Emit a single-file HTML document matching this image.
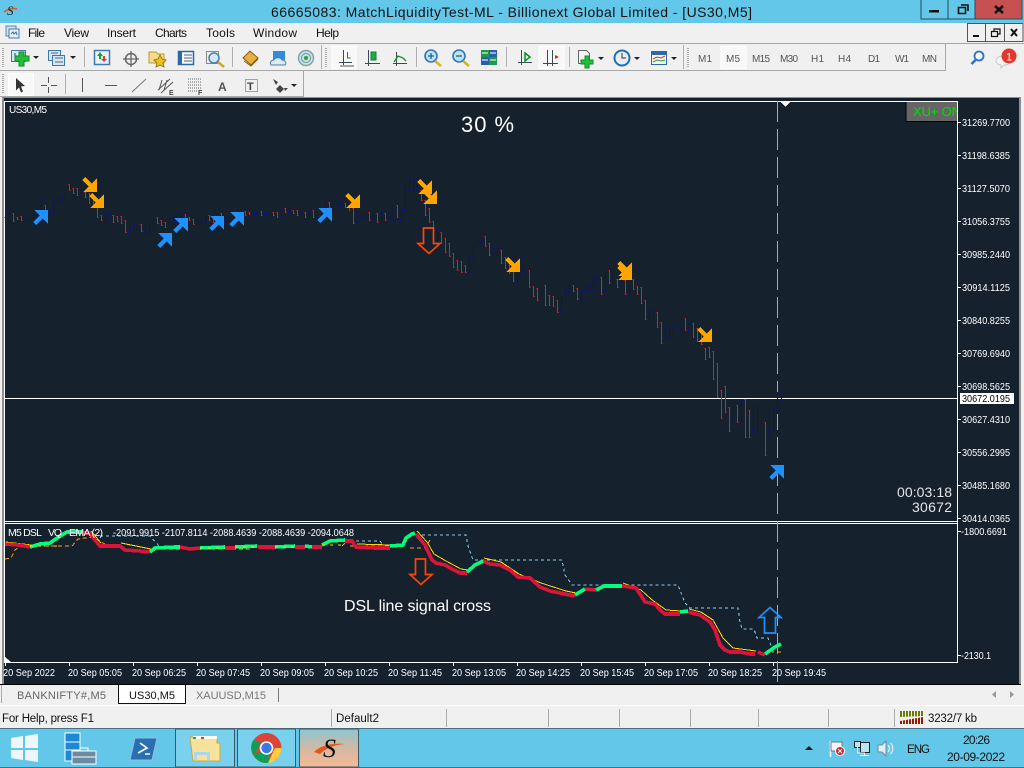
<!DOCTYPE html>
<html><head><meta charset="utf-8"><title>MT4</title>
<style>
html,body{margin:0;padding:0;width:1024px;height:768px;overflow:hidden;background:#f0f0f0}
svg{display:block;position:absolute;left:0;top:0}
text{font-family:"Liberation Sans",sans-serif}
.m{font-size:12px;fill:#111}
.p{font-size:10.5px;fill:#fff}
.t{font-size:10.5px;fill:#fff}
.f{font-size:10px;fill:#555}
</style></head><body>
<svg width="1024" height="768" viewBox="0 0 1024 768" xmlns="http://www.w3.org/2000/svg">
<defs>
<polygon id="o" fill="#FFA500" points="0,3 3,0 9.500,6.500 15,1 15,15 1,15 6.500,9.500" shape-rendering="crispEdges"/>
<g id="b"><polygon fill="#1E90FF" transform="translate(0,15) scale(1,-1)" points="0,3 3,0 9.500,6.500 15,1 15,15 1,15 6.500,9.500" shape-rendering="crispEdges"/></g>
<linearGradient id="act" x1="0" y1="0" x2="0" y2="1"><stop offset="0" stop-color="#8cc6d0"/><stop offset=".55" stop-color="#d8b8a0"/><stop offset="1" stop-color="#f6b994"/></linearGradient>
</defs>
<!-- title bar -->
<rect width="1024" height="23" fill="#63C7E9"/>
<path d="M4 12C8 9 14 8 17 9" stroke="#E4571B" stroke-width="1.600" fill="none"/>
<text x="7" y="15" font-size="13" font-style="italic" fill="#222" style="font-family:'Liberation Serif',serif">S</text>
<text x="271" y="17" font-size="14" fill="#111" textLength="481">66665083: MatchLiquidityTest-ML - Billionext Global Limited - [US30,M5]</text>
<rect x="921" y="-1" width="27" height="20" fill="#63C7E9" stroke="#2a4a5a"/>
<rect x="948" y="-1" width="27" height="20" fill="#63C7E9" stroke="#2a4a5a"/>
<rect x="975" y="-1" width="47" height="20" fill="#C75050" stroke="#2a4a5a"/>
<rect x="929" y="10" width="10" height="2.500" fill="#111"/>
<path d="M958.500 7.500h7v6h-7zM961 5h7v6" fill="none" stroke="#111" stroke-width="1.600"/>
<path d="M995 6l8 7M1003 6l-8 7" stroke="#111" stroke-width="2.600"/>
<!-- menu -->
<rect y="23" width="1024" height="20" fill="#f0f0f0"/>
<rect x="6" y="26" width="10" height="10" fill="#cfe2f3" stroke="#5b86b5"/>
<rect x="9" y="29" width="10" height="9" fill="#e6f0fa" stroke="#4a78ab"/>
<path d="M11 34l2-2 1 2 2-2 1 3" stroke="#3a6ca0" fill="none"/>
<text class="m" x="28" y="37" textLength="17">File</text>
<text class="m" x="64" y="37" textLength="25">View</text>
<text class="m" x="107" y="37" textLength="29">Insert</text>
<text class="m" x="155" y="37" textLength="32">Charts</text>
<text class="m" x="206" y="37" textLength="29">Tools</text>
<text class="m" x="253" y="37" textLength="44">Window</text>
<text class="m" x="316" y="37" textLength="23">Help</text>
<g fill="#f0f0f0" stroke="#555"><rect x="967.500" y="23.500" width="18" height="18"/><rect x="985.500" y="23.500" width="19" height="18"/><rect x="1004.500" y="23.500" width="18.500" height="18"/></g>
<rect x="973" y="35" width="6" height="2" fill="#111"/>
<path d="M991.500 31.500h6v5h-6zM994 31v-2h6v5h-3" fill="none" stroke="#111" stroke-width="1.200"/>
<path d="M1011 29l6 7M1017 29l-6 7" stroke="#111" stroke-width="2"/>
<!-- toolbars -->
<rect y="43" width="1024" height="55" fill="#f0f0f0"/>
<path d="M0 43.500H1024" stroke="#a8a8a8"/>
<path d="M0 70.500H945.500V44" stroke="#a8a8a8" fill="none"/>
<path d="M0 96.500H303.500V71" stroke="#a8a8a8" fill="none"/>
<g stroke="#b0b0b0"><path d="M84.500 47v20M232.500 47v20M321.500 45v24M416.500 47v20M506.500 47v20M569.500 47v20M683.500 45v24M65.500 74v20"/></g>
<g stroke="#aaa" stroke-dasharray="1 1" stroke-width="2"><path d="M3 48v20M326 48v20M688 48v20M3 74v20"/></g>
<!-- selected boxes -->
<g fill="#f8f8f8" stroke="#fff"><rect x="332" y="46.500" width="24" height="22"/><rect x="539" y="46.500" width="25" height="22"/><rect x="721" y="46.500" width="25" height="22"/><rect x="8.500" y="73.500" width="25" height="22"/></g>
<!-- new chart -->
<rect x="11.500" y="50.500" width="14" height="11" fill="#d4e6f8" stroke="#3f74ad"/>
<path d="M15 53v6M15 59h6" stroke="#345" fill="none"/>
<path d="M18 53h5v4h5v5h-5v5h-5v-5h-4v-5h4z" fill="#22C03A" stroke="#128a25" transform="translate(1,-1)"/>
<path d="M33 56h6l-3 3z" fill="#222"/>
<!-- profiles -->
<rect x="48.500" y="50.500" width="12" height="10" fill="#d4e6f8" stroke="#3f74ad"/><rect x="52.500" y="55.500" width="12" height="10" fill="#d4e6f8" stroke="#3f74ad"/>
<path d="M55 58h8M55 62h8M51 53h7" stroke="#567"/>
<path d="M70 56h6l-3 3z" fill="#222"/>
<!-- market watch -->
<rect x="94.500" y="50.500" width="15" height="14" fill="#eaf2fb" stroke="#3f78b5" stroke-width="1.500"/>
<path d="M100 52l3 4h-2v3h-2v-3h-2z" fill="#1a9f2b"/><path d="M104 62l-3-3h2v-3h2v3h2z" fill="#d8402a"/>
<!-- crosshair -->
<circle cx="131" cy="59" r="5.500" fill="none" stroke="#666" stroke-width="1.500"/><path d="M131 51v16M123 59h16" stroke="#666" stroke-width="1.300"/>
<!-- navigator -->
<path d="M149 52h7l2 2h6v9h-15z" fill="#f4dc88" stroke="#b59a3e"/>
<path d="M160 55l2 4 4 1-3 3 1 4-4-2-4 2 1-4-3-3 4-1z" fill="#f0c21e" stroke="#9e7e14"/>
<!-- terminal -->
<rect x="178.500" y="51.500" width="15" height="13" fill="#f4f8fc" stroke="#2f66a5" stroke-width="1.500"/><rect x="179" y="52" width="3" height="12" fill="#2f66a5"/>
<path d="M184 55h8M184 58h8M184 61h8" stroke="#567"/>
<!-- tester -->
<rect x="206.500" y="51.500" width="12" height="12" fill="#eee" stroke="#888"/>
<circle cx="214" cy="58" r="5" fill="#d5e6f5" stroke="#4a7fb0" stroke-width="1.500"/><path d="M218 62l6 5" stroke="#d6a821" stroke-width="2.500"/>
<!-- book -->
<path d="M243 58l7-7 8 7-7 7z" fill="#E6B03E" stroke="#8a5a12"/><path d="M244 61l7 5 7-7" stroke="#8a5a12" fill="none"/>
<!-- cloud -->
<rect x="273" y="51" width="12" height="9" fill="#2f8be0"/><path d="M271 65c-2-3 1-5 3-5 1-3 7-3 8 0 3 0 5 3 3 5z" fill="#dbeaf6" stroke="#4f7ca8"/>
<!-- signal -->
<circle cx="306" cy="58" r="7.500" fill="#cfe0e0" stroke="#7fa8a8" stroke-width="1.500"/><circle cx="306" cy="58" r="4.500" fill="none" stroke="#5fa0a0"/><circle cx="306" cy="58" r="2" fill="#2aa050"/>
<!-- chart type -->
<g stroke="#3a4a55" fill="none"><path d="M343.500 50v15M339 62.500h13"/></g><path d="M347.500 52v6h3" stroke="#0a8a20" fill="none"/><path d="M340 66h14" stroke="#555"/>
<g stroke="#3a4a55" fill="none"><path d="M368.500 50v16M365 63.500h15"/></g><rect x="371" y="52" width="5" height="8" fill="#22b030" stroke="#175"/>
<g stroke="#3a4a55" fill="none"><path d="M396.500 52v14M393 63.500h14"/></g><path d="M394 62l4-6 5 2 3 3" stroke="#128a25" fill="none" stroke-width="1.300"/>
<!-- zoom -->
<circle cx="431" cy="56" r="6" fill="#bfe0f5" stroke="#2f78b8" stroke-width="1.600"/><path d="M428 56h6M431 53v6" stroke="#1f5f9f" stroke-width="1.300"/><path d="M435 61l6 5" stroke="#d6b421" stroke-width="2.600"/>
<circle cx="459" cy="56" r="6" fill="#bfe0f5" stroke="#2f78b8" stroke-width="1.600"/><path d="M456 56h6" stroke="#1f5f9f" stroke-width="1.300"/><path d="M463 61l6 5" stroke="#d6b421" stroke-width="2.600"/>
<!-- grid -->
<rect x="481" y="50" width="8" height="7" fill="#1d9a52"/><rect x="489" y="50" width="8" height="7" fill="#2a5fb0"/><rect x="481" y="57" width="8" height="8" fill="#2a5fb0"/><rect x="489" y="57" width="8" height="8" fill="#1d9a52"/>
<path d="M482 53h6M490 53h6M482 60h6M490 60h6" stroke="#fff"/>
<!-- autoscroll/shift -->
<path d="M521.500 50v15M518 62.500h14" stroke="#3a4a55" fill="none"/><path d="M525 53l5 4-5 4z" fill="none" stroke="#0a8a20" stroke-width="1.500"/>
<path d="M547.500 50v16M552.500 50v16M543 63.500h15" stroke="#3a4a55" fill="none"/><path d="M559 57l-4-2v4z" fill="#c03018"/>
<!-- indicators -->
<path d="M578.500 50.500h8l3 3v10h-11z" fill="#f4f4f4" stroke="#666"/>
<path d="M585 56h4v4h4v4h-4v4h-4v-4h-4v-4h4z" fill="#22C03A" stroke="#128a25"/>
<path d="M598 57h6l-3 3z" fill="#222"/>
<circle cx="622" cy="58" r="7.500" fill="#e8eef5" stroke="#1e6fb8" stroke-width="2"/><path d="M622 53v5h4" stroke="#333" fill="none"/>
<path d="M634 57h6l-3 3z" fill="#222"/>
<rect x="651.500" y="51.500" width="15" height="13" fill="#f2f6ee" stroke="#2f66a5"/><rect x="652" y="52" width="14" height="3" fill="#2f66a5"/>
<path d="M653 59l4-2 4 1 4-2" stroke="#c04030" fill="none"/><path d="M653 62l4-2 4 1 4-1" stroke="#3a9a30" fill="none"/>
<path d="M671 57h6l-3 3z" fill="#222"/>
<!-- periods -->
<g class="f"><text class="f" x="698" y="62" textLength="14">M1</text><text class="f" x="726" y="62" textLength="14">M5</text><text class="f" x="752" y="62" textLength="18">M15</text><text class="f" x="780" y="62" textLength="18">M30</text><text class="f" x="811" y="62" textLength="13">H1</text><text class="f" x="838" y="62" textLength="13">H4</text><text class="f" x="868" y="62" textLength="12">D1</text><text class="f" x="895" y="62" textLength="14">W1</text><text class="f" x="922" y="62" textLength="15">MN</text></g>
<!-- search -->
<circle cx="979" cy="56" r="4.500" fill="#f4f8ff" stroke="#2f70c0" stroke-width="1.800"/><path d="M975.500 60l-4 4" stroke="#2f70c0" stroke-width="2.400"/>
<!-- chat -->
<path d="M996 61c0-3 3-5 7-5s7 2 7 5-3 4-6 4l-3 3v-3c-3 0-5-2-5-4z" fill="#f4f4f4" stroke="#c8c8c8"/>
<circle cx="1009" cy="56" r="7.500" fill="#E2372A"/><text x="1006" y="60.500" font-size="11" fill="#fff">1</text>
<!-- row 2 -->
<path d="M16 78l9 8-4 .5 2 5-2 1-2-5-3 3z" fill="#333"/>
<path d="M48.500 77v6M48.500 87v6M41 85.500h6M51 85.500h6" stroke="#555"/>
<path d="M82.500 78v14" stroke="#555"/>
<path d="M105 85.500h12" stroke="#555"/>
<path d="M132 92l14-13" stroke="#777"/>
<path d="M158 90l12-11M161 93l12-11M162 80l-3 10M167 80l-3 10" stroke="#555" fill="none"/>
<text x="169" y="95" font-size="7" fill="#444" font-weight="bold">E</text>
<path d="M188 79h14M188 82h14M188 85h14M188 88h14M188 91h10" stroke="#666" stroke-dasharray="1 1"/>
<text x="198" y="95" font-size="7" fill="#444" font-weight="bold">F</text>
<text x="218" y="91" font-size="12" fill="#555" font-weight="bold">A</text>
<rect x="245.500" y="79.500" width="12" height="12" fill="none" stroke="#555" stroke-dasharray="1 1"/><text x="247" y="90" font-size="11" fill="#444" font-weight="bold">T</text>
<path d="M273 79l5 3-2 3zM280 85l4 4-4 4-4-4zM284 88h4l-3 3z" fill="#444"/>
<path d="M291 84h6l-3 3z" fill="#222"/>

<!-- chart area -->
<rect x="2" y="97" width="1019" height="588" fill="#8f8f8f"/>
<rect x="4" y="98" width="1015" height="586" fill="#16212E"/>
<rect x="1021" y="97" width="3" height="588" fill="#f0f0f0"/>
<rect x="0" y="97" width="2" height="588" fill="#f0f0f0"/>
<g shape-rendering="crispEdges">
<g stroke="#fff" fill="none">
<path d="M4.500 101.500H957.500V662.500H4.500z"/>
<path d="M4 521.500H957M4 523.500H957"/>
<path d="M5 398.500H957"/>
<path d="M957 122.500h4M957 155.500h4M957 188.500h4M957 221.500h4M957 254.500h4M957 287.500h4M957 320.500h4M957 353.500h4M957 386.500h4M957 419.500h4M957 452.500h4M957 485.500h4M957 518.500h4M957 531.500h4M957 655.500h4"/>
<path d="M5.500 662v4M69.500 662v4M133.500 662v4M197.500 662v4M261.500 662v4M325.500 662v4M389.500 662v4M453.500 662v4M517.500 662v4M581.500 662v4M645.500 662v4M709.500 662v4M773.500 662v4"/>
</g>
<path d="M777.500 101V684" stroke="#E5A52E" stroke-dasharray="21 7" fill="none"/>
<path d="M780 101h11l-5.500 6z" fill="#fff"/>
<path d="M5 657l6 5h-6z" fill="#fff"/>
<!-- price bars red -->
<path fill="none" stroke="#FF1010" transform="translate(0,.5)" d="M13.500 213h-1h1V221h1M17.500 217h-1h1V219h1M21.500 216h-1h1V220h1M45.500 205h-1h1V213h1M69.500 184h-1h1V190h1M73.500 188h-1h1V193h1M77.500 188h-1h1V195h1M85.500 192h-1h1V197h1M89.500 193h-1h1V203h1M93.500 197h-1h1V205h1M97.500 207h-1h1V217h1M101.500 215h-1h1V220h1M113.500 215h-1h1V222h1M117.500 216h-1h1V221h1M121.500 216h-1h1V223h1M125.500 220h-1h1V232h1M141.500 224h-1h1V231h1M157.500 217h-1h1V223h1M161.500 220h-1h1V225h1M165.500 222h-1h1V227h1M185.500 214h-1h1V220h1M189.500 217h-1h1V220h1M193.500 219h-1h1V224h1M209.500 215h-1h1V220h1M213.500 217h-1h1V222h1M221.500 213h-1h1V219h1M245.500 211h-1h1V215h1M249.500 212h-1h1V214h1M261.500 211h-1h1V215h1M273.500 212h-1h1V215h1M277.500 212h-1h1V217h1M285.500 208h-1h1V212h1M293.500 210h-1h1V213h1M297.500 210h-1h1V215h1M305.500 212h-1h1V217h1M313.500 210h-1h1V217h1M329.500 202h-1h1V207h1M345.500 203h-1h1V207h1M349.500 205h-1h1V210h1M353.500 208h-1h1V223h1M369.500 212h-1h1V220h1M377.500 213h-1h1V222h1M385.500 213h-1h1V220h1M397.500 205h-1h1V217h1M421.500 190h-1h1V200h1M425.500 200h-1h1V215h1M429.500 208h-1h1V222h1M433.500 221h-1h1V243h1M441.500 232h-1h1V243h1M445.500 238h-1h1V252h1M449.500 243h-1h1V256h1M453.500 253h-1h1V267h1M457.500 260h-1h1V270h1M461.500 261h-1h1V272h1M465.500 265h-1h1V272h1M485.500 236h-1h1V246h1M489.500 243h-1h1V255h1M501.500 250h-1h1V263h1M505.500 257h-1h1V268h1M509.500 263h-1h1V273h1M513.500 267h-1h1V281h1M529.500 270h-1h1V287h1M533.500 286h-1h1V296h1M537.500 288h-1h1V300h1M545.500 285h-1h1V305h1M549.500 295h-1h1V305h1M553.500 296h-1h1V306h1M557.500 300h-1h1V312h1M573.500 285h-1h1V291h1M577.500 288h-1h1V299h1M601.500 277h-1h1V294h1M609.500 270h-1h1V283h1M617.500 279h-1h1V287h1M625.500 280h-1h1V294h1M633.500 279h-1h1V289h1M637.500 286h-1h1V294h1M641.500 287h-1h1V303h1M645.500 300h-1h1V319h1M657.500 312h-1h1V327h1M661.500 322h-1h1V343h1M685.500 318h-1h1V330h1M693.500 323h-1h1V337h1M697.500 328h-1h1V341h1M701.500 333h-1h1V344h1M705.500 348h-1h1V359h1M709.500 347h-1h1V357h1M713.500 351h-1h1V379h1M717.500 363h-1h1V397h1M721.500 390h-1h1V418h1M725.500 386h-1h1V412h1M729.500 407h-1h1V431h1M737.500 405h-1h1V422h1M745.500 399h-1h1V437h1M749.500 410h-1h1V437h1M765.500 422h-1h1V455h1"/>
<!-- price bars blue -->
<path fill="none" stroke="#0000F0" transform="translate(0,.5)" d="M5.500 217h-1h1V212h1M9.500 217h-1h1V213h1M25.500 221h-1h1V218h1M29.500 221h-1h1V217h1M33.500 223h-1h1V213h1M37.500 218h-1h1V213h1M41.500 215h-1h1V200h1M49.500 217h-1h1V210h1M53.500 212h-1h1V202h1M57.500 203h-1h1V197h1M61.500 202h-1h1V196h1M65.500 201h-1h1V187h1M81.500 197h-1h1V189h1M105.500 223h-1h1V214h1M109.500 218h-1h1V214h1M129.500 232h-1h1V225h1M133.500 228h-1h1V224h1M137.500 229h-1h1V223h1M145.500 233h-1h1V225h1M149.500 232h-1h1V223h1M153.500 227h-1h1V217h1M169.500 223h-1h1V217h1M173.500 222h-1h1V216h1M177.500 222h-1h1V215h1M181.500 220h-1h1V214h1M197.500 223h-1h1V219h1M201.500 223h-1h1V219h1M205.500 222h-1h1V215h1M217.500 222h-1h1V216h1M225.500 222h-1h1V218h1M229.500 221h-1h1V217h1M233.500 220h-1h1V215h1M237.500 218h-1h1V212h1M241.500 217h-1h1V212h1M253.500 214h-1h1V212h1M257.500 214h-1h1V212h1M265.500 214h-1h1V212h1M269.500 214h-1h1V211h1M281.500 216h-1h1V210h1M289.500 212h-1h1V210h1M301.500 217h-1h1V212h1M309.500 217h-1h1V210h1M317.500 218h-1h1V213h1M321.500 223h-1h1V213h1M325.500 215h-1h1V202h1M333.500 207h-1h1V203h1M337.500 205h-1h1V202h1M341.500 206h-1h1V202h1M357.500 222h-1h1V212h1M361.500 218h-1h1V213h1M365.500 218h-1h1V213h1M373.500 218h-1h1V215h1M381.500 223h-1h1V212h1M389.500 218h-1h1V217h1M393.500 220h-1h1V210h1M401.500 220h-1h1V210h1M405.500 210h-1h1V183h1M409.500 190h-1h1V178h1M413.500 190h-1h1V180h1M417.500 188h-1h1V177h1M437.500 242h-1h1V230h1M469.500 272h-1h1V256h1M473.500 259h-1h1V243h1M477.500 245h-1h1V241h1M481.500 242h-1h1V237h1M493.500 255h-1h1V248h1M497.500 255h-1h1V248h1M517.500 282h-1h1V267h1M521.500 272h-1h1V258h1M525.500 277h-1h1V270h1M541.500 295h-1h1V285h1M561.500 312h-1h1V297h1M565.500 299h-1h1V290h1M569.500 292h-1h1V285h1M581.500 303h-1h1V290h1M585.500 292h-1h1V287h1M589.500 290h-1h1V286h1M593.500 290h-1h1V276h1M597.500 280h-1h1V275h1M605.500 290h-1h1V271h1M613.500 283h-1h1V275h1M621.500 282h-1h1V275h1M629.500 296h-1h1V285h1M649.500 319h-1h1V310h1M653.500 317h-1h1V307h1M665.500 339h-1h1V328h1M669.500 336h-1h1V327h1M673.500 333h-1h1V326h1M681.500 330h-1h1V317h1M689.500 330h-1h1V322h1M733.500 420h-1h1V403h1M741.500 422h-1h1V400h1M753.500 430h-1h1V407h1M757.500 432h-1h1V405h1M761.500 433h-1h1V413h1M769.500 436h-1h1V407h1M773.500 430h-1h1V408h1M777.500 413h-1h1V392h1M781.500 400h-1h1V395h1"/>
</g>
<!-- arrows -->
<use href="#b" x="33" y="210"/><use href="#b" x="157" y="233"/><use href="#b" x="173" y="218"/><use href="#b" x="209" y="216"/><use href="#b" x="229" y="212"/><use href="#b" x="317" y="208"/><use href="#b" x="769" y="465"/>
<use href="#o" x="82" y="177"/><use href="#o" x="89" y="193"/><use href="#o" x="345" y="193"/><use href="#o" x="417" y="179"/><use href="#o" x="422" y="189"/><use href="#o" x="505" y="257"/><use href="#o" x="617" y="261"/><use href="#o" x="617" y="265"/><use href="#o" x="697" y="327"/>
<!-- outline arrows -->
<path d="M423.500 228H433.500V243.500H440L429 253.500 418 243.500H423.500Z" fill="none" stroke="#FF4500" stroke-width="1.700"/>
<path d="M415.500 559H425.500V574.500H432L421 584.500 410 574.500H415.500Z" fill="none" stroke="#FF4500" stroke-width="1.700"/>
<path d="M764.500 633H775.500V617.500H781L770 607.500 759 617.500H764.500Z" fill="none" stroke="#1E90FF" stroke-width="1.700"/>
<!-- indicator -->
<g fill="none" shape-rendering="crispEdges">
<path stroke="#87CEEB" stroke-dasharray="3 3" d="M100 536H150L160 547M350 541H380L383 545H395M416 535H466L468 546 473 560H562L565 575 572 585H678L685 603 690 608H738L740 622 742 629H754L757 638H768L772 648 778 650"/>
<path stroke="#FFA500" stroke-dasharray="4 3" d="M5 559L11 558 15 550 19 547M30 546H72L78 539 92 537 105 544M342 546L345 543M403 546H350M250 549H165M410 548H425L430 540M781 652H772"/>
<path stroke="#FFD700" transform="translate(1,-2)" d="M5 544L30 547M90 533L100 545M120 545L150 551M356 546L390 547M416 533L426 544 433 556 445 563 460 571 467 572M483 560L500 564 518 576 540 585 565 593 575 595M622 585L640 592 650 601 665 612 680 613M688 611L700 614 712 622 722 640 732 650 755 653"/>
<path stroke="#DC143C" stroke-width="3.600" d="M5 544L18 545 30 547M82 533L90 533 95 540 100 546 120 546 125 550 140 551 150 552M180 547L190 549 200 548M225 548L235 548M258 547L275 547M295 547L305 547M312 547L322 547M345 541L352 541 356 547 375 548 390 548M416 534L425 545 432 560 436 563 445 565 452 569 460 573 467 573M483 561L490 564 500 565 510 570 518 577 530 578 540 587 550 591 565 594 575 596M585 589L596 590M597 590L604 586M622 586L630 587 636 588 640 594 645 602 650 603 655 604 660 610 665 614 680 614M688 612L700 615 710 622 715 630 720 645 725 650 730 652 740 652 750 654 755 654M758 652L765 655"/>
<path stroke="#00FF7F" stroke-width="3.600" d="M30 547L40 544 50 543 60 536 67 532 82 532M150 552L155 548 175 547 180 547M200 548L225 547M235 547L257 546M275 547L295 546M305 546L312 547M322 545L330 541 345 540M390 546L403 545 406 538 412 534 415 533M467 572L475 565 483 561M575 595L585 589M596 590L604 586 622 586M680 612L688 611M765 654L775 647 781 644"/>
<path stroke="#FFD700" stroke-dasharray="3 5" d="M200 548H225M30 546H60M235 547H257M275 547H295M322 545H345"/>
</g>
<!-- chart text -->
<text x="9" y="113" font-size="10" fill="#fff" textLength="38">US30,M5</text>
<text x="461" y="132" font-size="22" fill="#fff" textLength="53">30 %</text>
<text x="897" y="497" font-size="14" fill="#e4e4e4" textLength="55">00:03:18</text>
<text x="912" y="512" font-size="14" fill="#e4e4e4" textLength="40">30672</text>
<rect x="906" y="102" width="51" height="19" fill="#666"/><path d="M906 102v19.500h51" fill="none" stroke="#000"/>
<svg x="906" y="102" width="51" height="19"><text x="7" y="14" font-size="13" fill="#00E000" textLength="48">XU+ ON</text></svg>
<path d="M957.500 101V122" stroke="#fff" fill="none"/>
<g>
<text class="p" x="962" y="126" textLength="48" lengthAdjust="spacingAndGlyphs">31269.7700</text>
<text class="p" x="962" y="159" textLength="48" lengthAdjust="spacingAndGlyphs">31198.6385</text>
<text class="p" x="962" y="192" textLength="48" lengthAdjust="spacingAndGlyphs">31127.5070</text>
<text class="p" x="962" y="225" textLength="48" lengthAdjust="spacingAndGlyphs">31056.3755</text>
<text class="p" x="962" y="258" textLength="48" lengthAdjust="spacingAndGlyphs">30985.2440</text>
<text class="p" x="962" y="291" textLength="48" lengthAdjust="spacingAndGlyphs">30914.1125</text>
<text class="p" x="962" y="324" textLength="48" lengthAdjust="spacingAndGlyphs">30840.8255</text>
<text class="p" x="962" y="357" textLength="48" lengthAdjust="spacingAndGlyphs">30769.6940</text>
<text class="p" x="962" y="390" textLength="48" lengthAdjust="spacingAndGlyphs">30698.5625</text>
<text class="p" x="962" y="423" textLength="48" lengthAdjust="spacingAndGlyphs">30627.4310</text>
<text class="p" x="962" y="456" textLength="48" lengthAdjust="spacingAndGlyphs">30556.2995</text>
<text class="p" x="962" y="489" textLength="48" lengthAdjust="spacingAndGlyphs">30485.1680</text>
<text class="p" x="962" y="522" textLength="48" lengthAdjust="spacingAndGlyphs">30414.0365</text>
</g>
<rect x="960" y="393" width="54" height="11" fill="#fff"/>
<text x="962" y="402" font-size="10.500" fill="#000" textLength="48" lengthAdjust="spacingAndGlyphs">30672.0195</text>
<text class="p" x="961" y="535" textLength="46" lengthAdjust="spacingAndGlyphs">-1800.6691</text>
<text class="p" x="961" y="659" textLength="30" lengthAdjust="spacingAndGlyphs">-2130.1</text>
<text class="p" x="8" y="536" textLength="34">M5 DSL</text>
<text class="p" x="48" y="536" textLength="14">VQ</text>
<text class="p" x="69" y="536" textLength="34">EMA (2)</text>
<text class="p" x="113" y="536" textLength="241" lengthAdjust="spacingAndGlyphs">-2091.9915 -2107.8114 -2088.4639 -2088.4639 -2094.0648</text>
<text x="344" y="611" font-size="16" fill="#fff" textLength="147">DSL line signal cross</text>
<g>
<text class="t" x="3" y="676" textLength="52" lengthAdjust="spacingAndGlyphs">20 Sep 2022</text>
<text class="t" x="68" y="676" textLength="54" lengthAdjust="spacingAndGlyphs">20 Sep 05:05</text>
<text class="t" x="132" y="676" textLength="54" lengthAdjust="spacingAndGlyphs">20 Sep 06:25</text>
<text class="t" x="196" y="676" textLength="54" lengthAdjust="spacingAndGlyphs">20 Sep 07:45</text>
<text class="t" x="260" y="676" textLength="54" lengthAdjust="spacingAndGlyphs">20 Sep 09:05</text>
<text class="t" x="324" y="676" textLength="54" lengthAdjust="spacingAndGlyphs">20 Sep 10:25</text>
<text class="t" x="388" y="676" textLength="54" lengthAdjust="spacingAndGlyphs">20 Sep 11:45</text>
<text class="t" x="452" y="676" textLength="54" lengthAdjust="spacingAndGlyphs">20 Sep 13:05</text>
<text class="t" x="516" y="676" textLength="54" lengthAdjust="spacingAndGlyphs">20 Sep 14:25</text>
<text class="t" x="580" y="676" textLength="54" lengthAdjust="spacingAndGlyphs">20 Sep 15:45</text>
<text class="t" x="644" y="676" textLength="54" lengthAdjust="spacingAndGlyphs">20 Sep 17:05</text>
<text class="t" x="708" y="676" textLength="54" lengthAdjust="spacingAndGlyphs">20 Sep 18:25</text>
<text class="t" x="772" y="676" textLength="54" lengthAdjust="spacingAndGlyphs">20 Sep 19:45</text>
</g>
<!-- tabs -->
<rect y="684" width="1024" height="21" fill="#f0f0f0"/>
<path d="M0 684.500H1021" stroke="#000"/>
<path d="M1.500 685v18" stroke="#aaa"/>
<rect x="118" y="685" width="67" height="19" fill="#fff"/>
<path d="M118.500 685v18.500H185.500V685" fill="none" stroke="#111"/>
<text x="17" y="699" font-size="11" fill="#666" textLength="89">BANKNIFTY#,M5</text>
<text x="129" y="699" font-size="11" fill="#111" textLength="46">US30,M5</text>
<text x="196" y="699" font-size="11" fill="#777" textLength="70">XAUUSD,M15</text>
<path d="M278.500 688v14" stroke="#777"/>
<path d="M996 691v7l-4-3.500zM1010 691v7l4-3.500z" fill="#999"/>
<!-- status -->
<rect y="705" width="1024" height="23" fill="#f0f0f0"/><path d="M0 705.500H1024" stroke="#fff"/>
<text x="2" y="722" font-size="11.500" fill="#111" textLength="92">For Help, press F1</text>
<text x="336" y="722" font-size="11.500" fill="#111" textLength="43">Default2</text>
<path d="M331.500 709v18M446.500 709v18M548.500 709v18M619.500 709v18M690.500 709v18M758.500 709v18M828.500 709v18M894.500 709v18" stroke="#aaa"/>
<path d="M900 711h23v5l-23 1zM900 720l23-4" fill="#6b7d00"/>
<path d="M900 724h23v-7l-23 4z" fill="#9a1a00"/>
<path d="M902.500 710v15M905.500 710v15M908.500 710v15M911.500 710v15M914.500 710v15M917.500 710v15M920.500 710v15" stroke="#f0f0f0"/>
<text x="928" y="722" font-size="11.500" fill="#111" textLength="49">3232/7 kb</text>
<!-- taskbar -->
<rect y="728" width="1024" height="40" fill="#63C7E9"/>
<path d="M0 728.500H1024M0 767.500H1024" stroke="#48707e"/>
<g fill="#eef8fc"><path d="M11 738l12-2v12H11zM25 736l13-2v14H25zM11 750h12v10l-12-2zM25 750h13v12l-13-2z"/></g>
<rect x="65" y="733" width="15" height="28" fill="#1E88D8"/><path d="M65 742h15M65 750h15" stroke="#fff"/><path d="M65 733h15v28H65z" fill="none" stroke="#fff"/>
<rect x="72" y="751" width="24" height="13" fill="#6d8ba0" stroke="#fff"/><path d="M80 751v-3h8v3" fill="none" stroke="#fff"/><path d="M72 757h24" stroke="#fff"/>
<path d="M135 738h22l-5 22h-22z" fill="#2a6fb0" stroke="#8cc0e0"/><path d="M140 743l7 5-9 5" fill="none" stroke="#fff" stroke-width="1.600"/><path d="M145 754h5" stroke="#fff" stroke-width="1.500"/>
<rect x="175.500" y="729" width="59" height="38" fill="#79D1EE" stroke="#3a5a68"/>
<path d="M190 737h27v6h3v18h-27z" fill="#f6e29a" stroke="#c9a94a"/><rect x="193" y="736" width="24" height="3" fill="#fff"/><path d="M193 737h3v2h-3z" fill="#2aa840"/><path d="M201 737h3v2h-3z" fill="#d84028"/>
<path d="M194 760v-8h16v8h-3v-5h-10v5z" fill="#a8d8f0"/>
<rect x="237.500" y="729" width="58" height="38" fill="#79D1EE" stroke="#3a5a68"/>
<circle cx="266.500" cy="748" r="15" fill="#DB4437"/>
<path d="M253.500 755.500A15 15 0 0 0 271 762.300L266.500 748z" fill="#0F9D58"/>
<path d="M254 755l7-12 -7.500-3.200A15 15 0 0 0 253 755z" fill="#0F9D58"/>
<path d="M281.500 748A15 15 0 0 1 268 763L275 748z" fill="#FFCD40"/>
<circle cx="266.500" cy="748" r="6.800" fill="#fff"/><circle cx="266.500" cy="748" r="5.200" fill="#3B78E7"/>
<rect x="299.500" y="729" width="59" height="38" fill="url(#act)" stroke="#3a5a68"/>
<path d="M314 752c6-6 16-9 30-8-9 1-18 4-24 10z" fill="#E4571B"/>
<text x="323" y="757" font-size="26" font-style="italic" fill="#111" style="font-family:'Liberation Serif',serif">S</text>
<!-- tray -->
<path d="M809 746l4 4h-8z" fill="#111"/>
<path d="M830.500 741v16" stroke="#fff" stroke-width="1.500"/><path d="M831 742h11v9h-11z" fill="#eef8fc" stroke="#678"/>
<circle cx="840" cy="751" r="4.500" fill="#D8202A" stroke="#fff"/><path d="M838 749l4 4M842 749l-4 4" stroke="#fff"/>
<rect x="854.500" y="741.500" width="6" height="6" fill="#bfe4f0" stroke="#222"/><rect x="860.500" y="742.500" width="9" height="10" fill="#bfe4f0" stroke="#222"/><path d="M857.500 747v6h7v2M860 755.500h9" stroke="#eef" fill="none"/>
<path d="M878 745h4l4-4v15l-4-4h-4z" fill="#e0f0f8" stroke="#789"/><path d="M888 745c2 2 2 5 0 7M890.500 743c3 3 3 8 0 11" stroke="#e8f4fa" fill="none" stroke-width="1.200"/>
<text x="907" y="753" font-size="11.500" fill="#111" textLength="23">ENG</text>
<text x="963" y="744" font-size="12" fill="#111" textLength="27">20:26</text>
<text x="947" y="761" font-size="12" fill="#111" textLength="58">20-09-2022</text>
</svg>
</body></html>
